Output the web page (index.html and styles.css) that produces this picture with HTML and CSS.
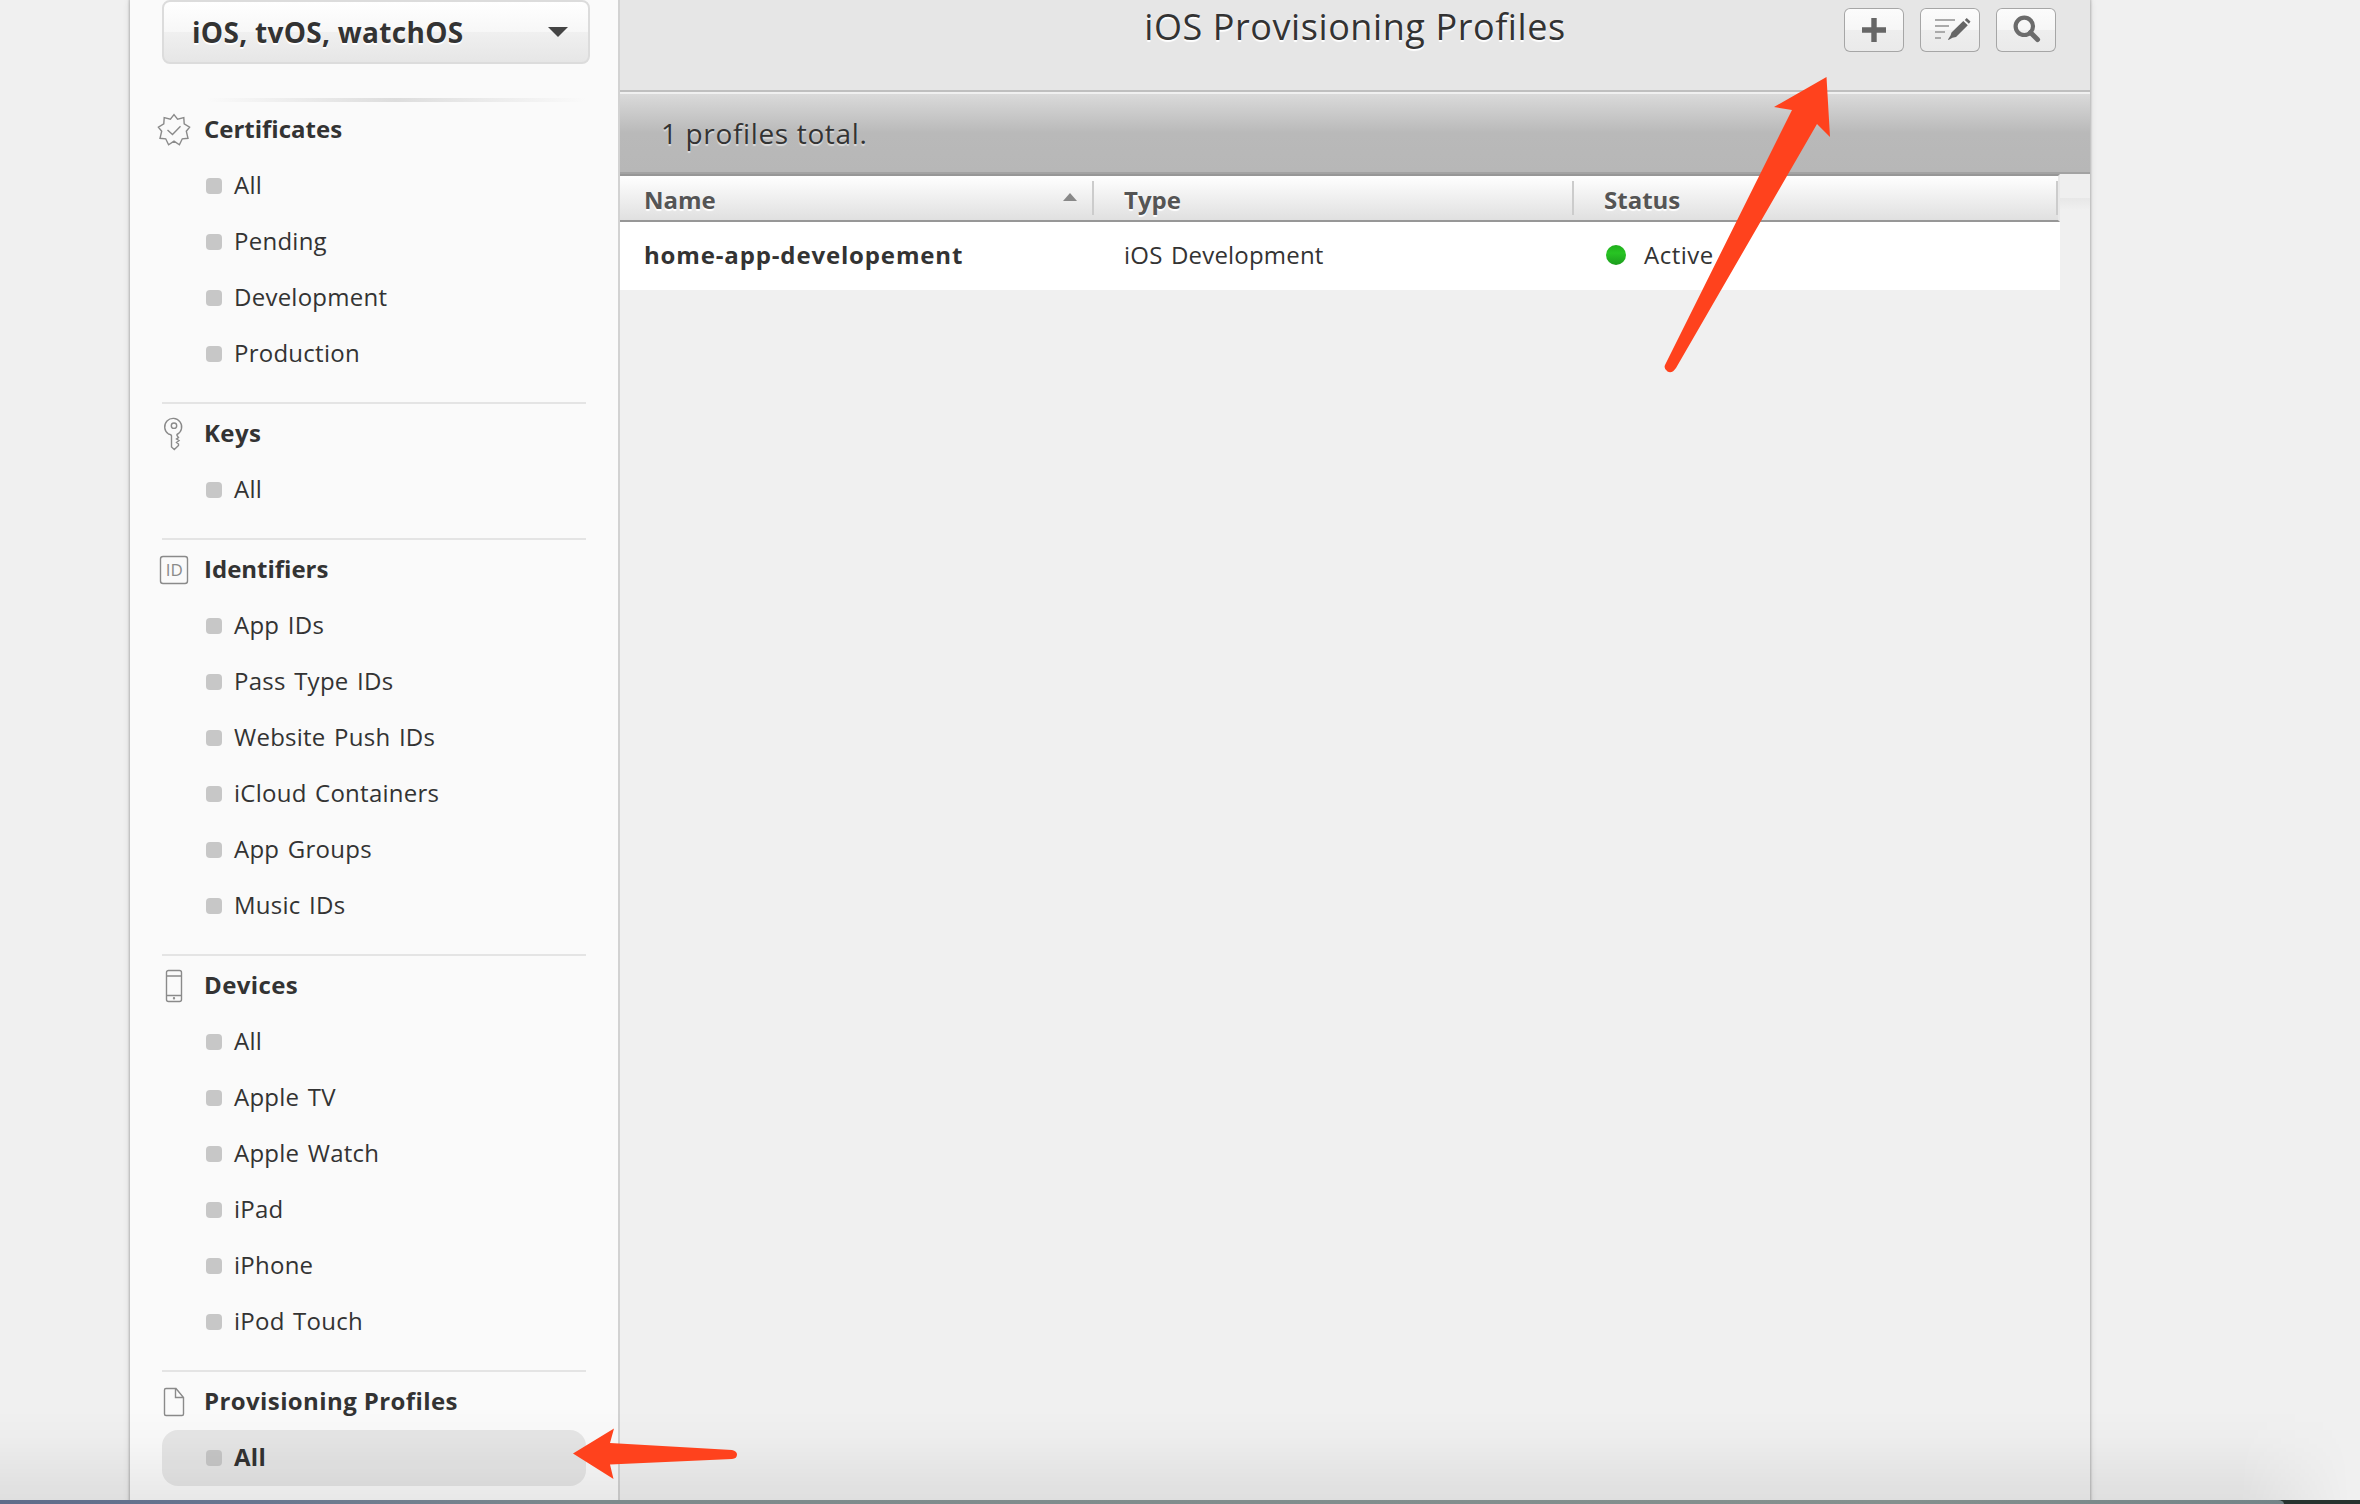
FILE: index.html
```html
<!DOCTYPE html>
<html lang="en">
<head>
<meta charset="utf-8">
<title>iOS Provisioning Profiles</title>
<link rel="stylesheet" href="styles.css">
</head>
<body>
<div class="page">
  <div class="container">
    <aside class="sidebar">
      <button class="platform"><span>iOS, tvOS, watchOS</span><svg class="caret" viewBox="0 0 20 10"><path d="M0 0H20L10 10Z"/></svg></button>
      <div class="fade-line"></div>
      <nav>
        <section class="group">
          <h2><svg class="icon" viewBox="0 0 34 34"><path d="M17 1.6L20.6 6.3L26.8 4.6L27.2 10.9L32.6 14.2L29.3 18.2L31 25.3L25.3 25.8L22.4 31.8L17 28.2L11.6 31.8L8.7 25.8L3 25.3L4.7 18.2L1.4 14.2L6.8 10.9L7.2 4.6L13.4 6.3Z"/><path d="M10.5 17L15.5 21.5L23.5 13.2"/></svg><span>Certificates</span></h2>
          <ul><li><span>All</span></li><li><span>Pending</span></li><li><span>Development</span></li><li><span>Production</span></li></ul>
        </section>
        <section class="group">
          <h2 class="spaced"><svg class="icon" viewBox="0 0 34 34"><path d="M14.5 18.5V30L17.3 32.5L21.5 28.5V27L19.5 25.5L22 23.5L19.5 22L21.5 20.5L20 18.5V17.5A8.5 8.5 0 1 0 11.5 17Q14.5 17.5 14.5 19"/><circle cx="17" cy="8.7" r="2.7"/></svg><span>Keys</span></h2>
          <ul><li><span>All</span></li></ul>
        </section>
        <section class="group">
          <h2><svg class="icon" viewBox="0 0 34 34"><rect x="3.5" y="3.5" width="27" height="27" rx="2.5"/><text class="id-label" x="17.2" y="23.3">ID</text></svg><span>Identifiers</span></h2>
          <ul><li><span>App IDs</span></li><li><span>Pass Type IDs</span></li><li><span>Website Push IDs</span></li><li><span>iCloud Containers</span></li><li><span>App Groups</span></li><li><span>Music IDs</span></li></ul>
        </section>
        <section class="group">
          <h2 class="spaced"><svg class="icon" viewBox="0 0 34 34"><rect x="9.5" y="1.5" width="15" height="31" rx="2"/><path d="M10 7H24M10 26.5H24"/><circle cx="17" cy="29.3" r=".5"/></svg><span>Devices</span></h2>
          <ul><li><span>All</span></li><li><span>Apple TV</span></li><li><span>Apple Watch</span></li><li><span>iPad</span></li><li><span>iPhone</span></li><li><span>iPod Touch</span></li></ul>
        </section>
        <section class="group">
          <h2 class="spaced"><svg class="icon" viewBox="0 0 34 34"><path d="M9 3.5H19L26.5 12.5V29Q26.5 30.5 25 30.5H9Q7.5 30.5 7.5 29V5Q7.5 3.5 9 3.5ZM18.5 3.5V12.5H26.5"/></svg><span>Provisioning Profiles</span></h2>
          <ul><li class="selected"><span>All</span></li></ul>
        </section>
      </nav>
    </aside>
    <main class="main">
      <header class="title-bar">
        <h1>iOS Provisioning Profiles</h1>
        <div class="tools">
          <button class="tool"><svg viewBox="0 0 60 44"><path class="fill" d="M27.3 10h5.4v9.3H42v5.4h-9.3V34h-5.4v-9.3H18v-5.4h9.3z"/></svg></button>
          <button class="tool"><svg viewBox="0 0 60 44"><path class="lines" d="M15 12H35M15 18H29M15 24H25M15 30H21"/><path class="fill" d="M43.3 13L47.8 17.3L36 29L32.5 29.7L28.5 32L28 31.5L30.5 27.5L31.5 24.5ZM44.8 12L46.7 10L50.5 13.6L48.9 15.8Z"/></svg></button>
          <button class="tool"><svg viewBox="0 0 60 44"><circle class="ring" cx="28.3" cy="18.3" r="8.7"/><path class="handle" d="M34.5 24.5L41.5 31.5"/></svg></button>
        </div>
      </header>
      <div class="summary">1 profiles total.</div>
      <div class="grid-area">
        <table class="profiles">
          <thead><tr><th><div><span>Name</span><svg class="sort" viewBox="0 0 14 8"><path d="M0 8L7 0L14 8Z"/></svg></div></th><th><div><span>Type</span></div></th><th><div><span>Status</span></div></th></tr></thead>
          <tbody><tr><td class="name">home-app-developement</td><td>iOS Development</td><td><div class="status"><i class="dot"></i>Active</div></td></tr></tbody>
        </table>
        <div class="gutter"></div>
      </div>
    </main>
  </div>
  <div class="bottom-shade"></div>
  <div class="desktop-strip"><div class="strip-window"></div></div>
  <svg class="annotations" viewBox="0 0 2360 1504">
    <path d="M1826.5 77L1830 137L1817 124L1676 368Q1672 374 1667.5 371.5Q1663.5 369 1665 365L1792 110L1774 107Z"/>
    <path d="M573 1453.5L614 1428.5L610 1443L732 1450Q737 1451 737 1454.5Q737 1458.5 732 1459L610 1464.5L613.5 1479Z"/>
  </svg>
</div>
</body>
</html>
```
FILE: styles.css
```css
* { box-sizing: border-box; }
body { margin: 0; font: 24px/56px "Open Sans", "Noto Sans", sans-serif; letter-spacing: .2px; color: #333; background: #f0f0f0; }
h1, h2, ul { margin: 0; padding: 0; }
button { font: inherit; color: inherit; letter-spacing: inherit; margin: 0; padding: 0; }
svg { display: block; }
.page { position: relative; width: 2360px; height: 1504px; overflow: hidden; }
.container { display: flex; width: 1960px; height: 1504px; margin-left: 130px; box-shadow: 0 0 2px 1px rgba(0,0,0,.2), 0 0 7px rgba(0,0,0,.12); background: #f0f0f0; }

.sidebar { width: 490px; padding: 0 28px 0 32px; background: #fafafa; border-right: 2px solid #d2d2d2; }
.platform { display: flex; align-items: center; justify-content: space-between; width: 428px; height: 64px; padding: 0 20px 0 28px; border: 2px solid #dcdcdc; border-radius: 8px; background: linear-gradient(#fff, #f7f7f7 50%, #f0f0f0 50%, #e6e6e6); font-size: 28px; font-weight: 700; letter-spacing: .3px; text-shadow: 0 2px 1px #fff; }
.platform span { padding-bottom: 1px; }
.caret { width: 20px; height: 10px; fill: #444; }
.fade-line { width: 380px; height: 4px; margin: 34px 0 0 44px; background: linear-gradient(90deg, transparent, #ddd 50%, transparent); }
.group { width: 424px; padding-bottom: 20px; }
.group + .group { border-top: 2px solid #e4e4e4; padding-top: 2px; }
.group h2 { display: flex; align-items: center; gap: 13px; height: 56px; margin-left: -5px; font-size: 24px; font-weight: 700; letter-spacing: 0; }
.group h2.spaced { letter-spacing: .4px; }
.group span { padding-bottom: 2px; }
.icon { width: 34px; height: 34px; fill: none; stroke: #8a8a8a; stroke-width: 1.4; }
.id-label { font-size: 17px; font-weight: 400; letter-spacing: 0; text-anchor: middle; fill: #8a8a8a; stroke: none; }
.group ul { list-style: none; }
.group li { display: flex; align-items: center; gap: 12px; height: 56px; padding-left: 44px; letter-spacing: .25px; word-spacing: 2px; }
.group li::before { content: ""; width: 16px; height: 16px; border-radius: 4px; background: #c7c7c7; }
.group .selected { border-radius: 16px; background: #e6e6e6; font-weight: 700; }

.main { width: 1470px; }
.title-bar { display: grid; grid-template-columns: 1fr; height: 94px; background: #e6e6e6; border-bottom: 2px solid #f0f0f0; box-shadow: inset 0 -2px #bfbfbf; }
.title-bar > * { grid-area: 1 / 1; }
.title-bar h1 { font-size: 36px; font-weight: 400; line-height: 53px; text-align: center; letter-spacing: .58px; text-shadow: 0 2px 1px #fff; }
.tools { display: flex; gap: 16px; justify-content: flex-end; padding: 8px 34px 0 0; }
.tool { width: 60px; height: 44px; border: 0; border-radius: 6px; box-shadow: inset 0 0 0 1px #a6a6a6; background: linear-gradient(#fcfcfc, #f6f6f6 50%, #eee 50%, #eaeaea); }
.tool svg { width: 60px; height: 44px; }
.fill { fill: #666; }
.lines { stroke: #aaa; stroke-width: 2; }
.ring { fill: none; stroke: #6b6b6b; stroke-width: 4.2; }
.handle { stroke: #6b6b6b; stroke-width: 5; stroke-linecap: round; }
.summary { height: 80px; padding-left: 41px; border-bottom: 2px solid #a3a3a3; background: linear-gradient(#dadada, #b9b9b9 50%, #b7b7b7); font-size: 28px; line-height: 78px; letter-spacing: .65px; text-shadow: 0 2px 1px #ddd; }

.grid-area { display: flex; align-items: flex-start; }
.profiles { width: 1440px; border-collapse: separate; border-spacing: 0; table-layout: fixed; }
.profiles th { height: 48px; padding: 0; border: solid #979797; border-width: 2px 0; background: linear-gradient(#fff, #e0e0e0); text-align: left; color: #555; font-weight: 700; letter-spacing: 0; text-shadow: 0 2px 1px #fff; }
.profiles th div { display: flex; align-items: center; justify-content: space-between; height: 34px; padding: 0 15px 0 24px; border-right: 2px solid #ccc; }
.profiles th span { padding-top: 3px; }
.profiles th:first-child { width: 474px; }
.profiles th:nth-child(2) { width: 480px; }
.profiles th:last-child { border-right: 2px solid #e9e9e9; }
.sort { width: 14px; height: 8px; margin-bottom: 2px; fill: #888; }
.profiles td { height: 68px; padding: 0 24px 2px; background: #fff; line-height: 66px; }
.profiles th:nth-child(n+2) div, .profiles td:nth-child(n+2) { padding-left: 30px; }
.profiles td:nth-child(2) { word-spacing: 2px; }
.profiles .name { font-weight: 700; letter-spacing: .85px; }
.status { display: flex; align-items: center; gap: 18px; padding-left: 2px; letter-spacing: .5px; }
.dot { width: 20px; height: 20px; border-radius: 50%; background: linear-gradient(#1fae1c, #28c423 40%, #1c9c1d); }
.gutter { flex: 1; height: 36px; background: linear-gradient(#efefef 24px, #e7e7e7 24px, #f0f0f0); }

.bottom-shade { position: absolute; left: 0; bottom: 4px; width: 2360px; height: 90px; background: linear-gradient(transparent, rgba(0,0,0,.015) 35%, rgba(0,0,0,.07)); mask-image: linear-gradient(90deg, #000 2240px, transparent 2350px); }
.desktop-strip { position: absolute; left: 0; bottom: 0; width: 2360px; height: 4px; background: #27332f; }
.strip-window { width: 2284px; height: 4px; border-top-right-radius: 6px 4px; background: linear-gradient(90deg, #5f6c8a, #687690 250px, #7d8a8c 600px, #84908e 1900px, #738488); }
.annotations { position: absolute; inset: 0; width: 2360px; height: 1504px; fill: #ff421d; }
```
